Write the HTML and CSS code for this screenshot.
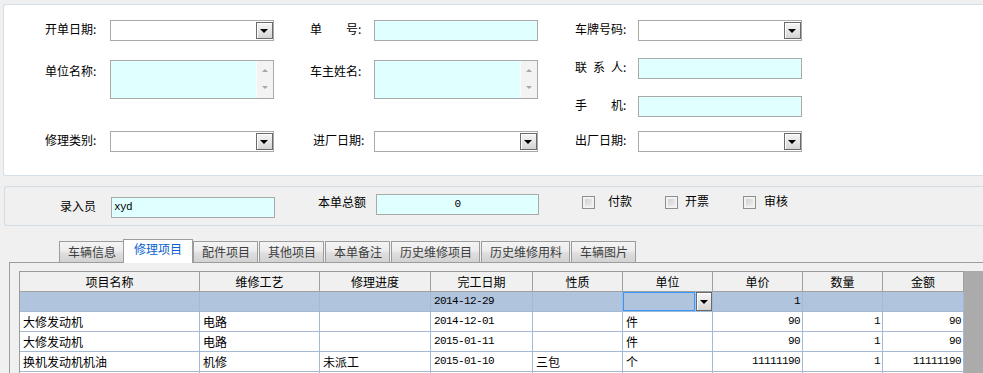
FILE: index.html
```html
<!DOCTYPE html>
<html>
<head>
    <meta charset="utf-8" />
    <link rel="stylesheet" href="styles.css">
    <title>维修开单</title>
</head>
<body>
    <!-- 单据抬头 -->
    <div class="head-panel">
        <div class="form-grid">
            <span class="lbl">开单日期:</span>
            <div class="combo"><span class="drop"></span></div>
            <span class="lbl">单　　号:</span>
            <div class="txt"></div>
            <span class="lbl">车牌号码:</span>
            <div class="combo"><span class="drop"></span></div>

            <span class="lbl low">单位名称:</span>
            <div class="memo"><div class="bar"><span class="up"></span><span class="dn"></span></div></div>
            <span class="lbl low">车主姓名:</span>
            <div class="memo"><div class="bar"><span class="up"></span><span class="dn"></span></div></div>
            <span class="lbl">联&ensp;系&ensp;人:</span>
            <div class="txt"></div>

            <span class="lbl phone-lbl">手　　机:</span>
            <div class="txt phone-in"></div>

            <span class="lbl r4">修理类别:</span>
            <div class="combo r4"><span class="drop"></span></div>
            <span class="lbl r4 in-date">进厂日期:</span>
            <div class="combo r4"><span class="drop"></span></div>
            <span class="lbl r4">出厂日期:</span>
            <div class="combo r4"><span class="drop"></span></div>
        </div>
    </div>

    <!-- 录入员 / 总额 -->
    <div class="entry-bar">
        <span class="e-lbl">录入员</span>
        <div class="txt mono operator">xyd</div>
        <span class="e-lbl total-lbl">本单总额</span>
        <div class="txt mono total">0</div>
        <span class="check chk-pay"></span><span class="c-lbl lbl-pay">付款</span>
        <span class="check chk-bill"></span><span class="c-lbl lbl-bill">开票</span>
        <span class="check chk-audit"></span><span class="c-lbl lbl-audit">审核</span>
    </div>

    <div class="tab-area">
        <div class="tab-strip">
            <span class="tab">车辆信息</span>
            <span class="tab active">修理项目</span>
            <span class="tab">配件项目</span>
            <span class="tab">其他项目</span>
            <span class="tab">本单备注</span>
            <span class="tab">历史维修项目</span>
            <span class="tab">历史维修用料</span>
            <span class="tab">车辆图片</span>
        </div>
        <div class="tab-body">
            <div class="grid">
                <table class="items">
                    <colgroup>
                        <col class="w180"><col class="w120"><col class="w111"><col class="w102">
                        <col class="w90"><col class="w90"><col class="w90"><col class="w80"><col class="w81">
                    </colgroup>
                    <thead>
                        <tr>
                            <th>项目名称</th><th>维修工艺</th><th>修理进度</th><th>完工日期</th><th>性质</th>
                            <th>单位</th><th>单价</th><th>数量</th><th>金额</th>
                        </tr>
                    </thead>
                    <tbody>
                        <tr class="sel">
                            <td></td><td></td><td></td><td class="mono">2014-12-29</td><td></td>
                            <td class="combo-cell"><div class="cell-combo"><span class="box"></span><span class="drop"></span></div></td>
                            <td class="mono num">1</td><td></td><td></td>
                        </tr>
                        <tr>
                            <td>大修发动机</td><td>电路</td><td></td><td class="mono">2014-12-01</td><td></td>
                            <td>件</td><td class="mono num">90</td><td class="mono num">1</td><td class="mono num">90</td>
                        </tr>
                        <tr>
                            <td>大修发动机</td><td>电路</td><td></td><td class="mono">2015-01-11</td><td></td>
                            <td>件</td><td class="mono num">90</td><td class="mono num">1</td><td class="mono num">90</td>
                        </tr>
                        <tr>
                            <td>换机发动机机油</td><td>机修</td><td>未派工</td><td class="mono">2015-01-10</td><td>三包</td>
                            <td>个</td><td class="mono num">11111190</td><td class="mono num">1</td><td class="mono num">11111190</td>
                        </tr>
                        <tr>
                            <td></td><td></td><td></td><td></td><td></td><td></td><td></td><td></td><td></td>
                        </tr>
                    </tbody>
                </table>
            </div>
        </div>
    </div>
</body>
</html>
```

FILE: styles.css
```css
* {
    box-sizing: border-box;
}
body {
    margin: 0;
    background: #f0f0f0;
    font: 12px/1 "Noto Sans CJK SC", "Liberation Sans", sans-serif;
    color: #000;
    overflow: hidden;
}
.mono {
    font-family: "Liberation Mono", monospace;
    font-size: 11px;
    letter-spacing: -0.6px;
}

/* 抬头面板 */
.head-panel {
    margin: 4px 0 0 3px;
    height: 172px;
    background: #fff;
    border: 1px solid #d6dee6;
    border-right: none;
    border-radius: 3px 0 0 3px;
    padding: 15px 0 0 41px;
}
.form-grid {
    display: grid;
    grid-template-columns: 65px 200px 64px 201px 63px 164px;
    grid-template-rows: 38px 38px 35px 21px;
    align-items: start;
}
.lbl {
    line-height: 17px;
    white-space: nowrap;
}
.lbl.low {
    margin-top: 4px;
}
.in-date {
    padding-left: 3px;
}
.phone-lbl {
    grid-area: 3 / 5;
}
.phone-in {
    grid-area: 3 / 6;
}
.r4 {
    grid-row: 4;
}

.combo, .txt {
    width: 164px;
    height: 21px;
    border: 1px solid #a9a9a9;
}
.combo {
    background: #fff;
    display: flex;
    justify-content: flex-end;
    align-items: center;
}
.drop {
    position: relative;
    width: 17px;
    height: 17px;
    border: 1px solid #6a6a6a;
    background: linear-gradient(#f6f6f6, #e6e6e6 50%, #d4d4d4);
    box-shadow: inset 1px 1px #fff;
}
.drop::after {
    content: "";
    position: absolute;
    left: 3px;
    top: 6px;
    border-left: 4px solid transparent;
    border-right: 4px solid transparent;
    border-top: 4px solid #000;
}
.txt {
    background: #e0ffff;
}
.memo {
    grid-row: span 2;
    width: 164px;
    height: 39px;
    margin-top: 2px;
    border: 1px solid #a9a9a9;
    background: #e0ffff;
    display: flex;
    justify-content: flex-end;
}
.memo .bar {
    width: 17px;
    background: #f3f3f3;
    border-left: 1px solid #fafafa;
    display: flex;
    flex-direction: column;
    justify-content: space-between;
    align-items: center;
    padding: 8px 0 9px;
}
.memo .up {
    border-left: 3px solid transparent;
    border-right: 3px solid transparent;
    border-bottom: 3px solid #a6a6a6;
}
.memo .dn {
    border-left: 3px solid transparent;
    border-right: 3px solid transparent;
    border-top: 3px solid #a6a6a6;
}

/* 录入员栏 */
.entry-bar {
    margin: 10px 0 0 4px;
    height: 40px;
    border: 1px solid #d3dbe3;
    border-right: none;
    border-radius: 3px 0 0 3px;
    display: flex;
    align-items: flex-start;
    padding-left: 55px;
}
.e-lbl {
    line-height: 17px;
    margin-top: 10px;
}
.operator {
    margin: 10px 0 0 15px;
    line-height: 19px;
    padding-left: 2px;
}
.total-lbl {
    margin: 6px 0 0 43px;
}
.total {
    width: 163px;
    margin: 7px 0 0 10px;
    line-height: 19px;
    text-align: center;
}
.check {
    width: 13px;
    height: 13px;
    margin-top: 9px;
    border: 1px solid #8e8f8f;
    background: linear-gradient(135deg, #c9cbcf, #f4f4f4);
    box-shadow: inset 0 0 0 2px #f2f2f2;
}
.c-lbl {
    line-height: 17px;
    margin-top: 5px;
}
.chk-pay { margin-left: 43px; }
.lbl-pay { margin-left: 13px; }
.chk-bill { margin-left: 33px; }
.lbl-bill { margin-left: 7px; }
.chk-audit { margin-left: 34px; }
.lbl-audit { margin-left: 8px; }

/* 选项卡 */
.tab-area {
    margin: 13px 0 0 9px;
}
.tab-strip {
    display: flex;
    align-items: flex-end;
    padding-left: 50px;
}
.tab {
    height: 21px;
    padding: 0 7px 0 8px;
    margin-right: 1px;
    border: 1px solid #9c9c9c;
    border-bottom: none;
    background: linear-gradient(#f4f4f4, #ececec 45%, #dedede 55%, #d2d2d2);
    color: #3c3c3c;
    line-height: 20px;
    white-space: nowrap;
}
.tab.active {
    position: relative;
    z-index: 1;
    height: 24px;
    padding: 0 10px;
    margin: 0 0 -1px -2px;
    background: #fff;
    color: #0b5fd0;
    line-height: 17px;
}
.tab-body {
    height: 111px;
    border-top: 1px solid #9c9c9c;
    border-left: 1px solid #9c9c9c;
    background: #f0f0f0;
    padding: 8px 0 0 9px;
}
.grid {
    height: 102px;
    overflow: hidden;
    background: #ababab;
}

/* 修理项目表格 */
.items {
    table-layout: fixed;
    border-collapse: separate;
    border-spacing: 0;
    width: 945px;
    border-left: 1px solid #9a9a9a;
    border-top: 1px solid #9a9a9a;
}
.w180 { width: 180px; }
.w120 { width: 120px; }
.w111 { width: 111px; }
.w102 { width: 102px; }
.w90 { width: 90px; }
.w80 { width: 80px; }
.w81 { width: 81px; }
.items th {
    height: 20px;
    padding: 0;
    background: #f0f0f0;
    border-right: 1px solid #a0a0a0;
    border-bottom: 1px solid #a0a0a0;
    font-weight: normal;
    line-height: 19px;
    text-align: center;
}
.items td {
    height: 20px;
    padding: 0 3px;
    background: #fff;
    border-right: 1px solid #a3b9d4;
    border-bottom: 1px solid #a3b9d4;
    line-height: 19px;
    white-space: nowrap;
    overflow: hidden;
}
.items tr.sel td {
    background: #b0c4de;
}
.items td.num {
    text-align: right;
    padding-right: 2px;
}
.items td.combo-cell {
    padding: 0;
}
.cell-combo {
    display: flex;
    height: 19px;
}
.cell-combo .box {
    flex: 1;
    border: 1px solid #3399ff;
}
.cell-combo .drop {
    width: 16px;
    height: 19px;
    margin-left: 1px;
}
.cell-combo .drop::after {
    left: 3px;
    top: 7px;
}
```
